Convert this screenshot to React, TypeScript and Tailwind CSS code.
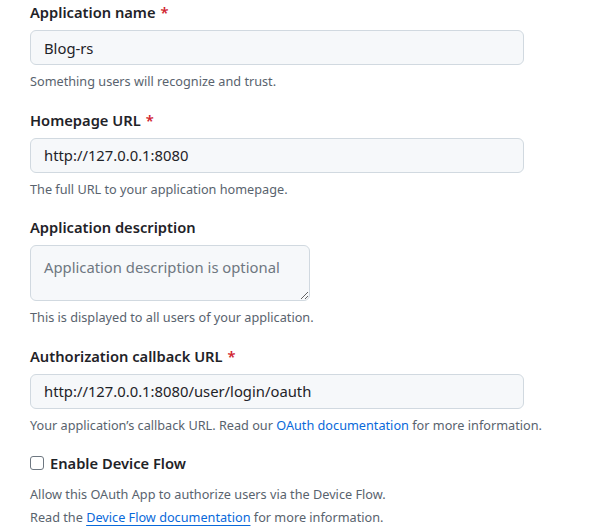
import React from 'react';

const font = { fontFamily: '"Segoe UI", "Noto Sans", "Liberation Sans", sans-serif' };

function Label({ text, required }: { text: string; required?: boolean }) {
  return (
    <div className="h-[22px] leading-[22px] text-[14.7px] font-semibold text-[#1f2328]">
      {text}
      {required && <span className="ml-[5px] text-[#d1242f]">*</span>}
    </div>
  );
}

function Hint({ children }: { children: React.ReactNode }) {
  return <div className="mt-[7px] h-[18px] leading-[18px] text-[12.7px] text-[#59636e]">{children}</div>;
}

function TextInput({ value }: { value: string }) {
  return (
    <input
      readOnly
      value={value}
      className="mt-[7px] block h-[35px] w-[494px] rounded-[6px] border border-[#d1d9e0] bg-[#f6f8fa] px-[13px] text-[14.8px] text-[#1f2328] outline-none"
    />
  );
}

export default function App() {
  return (
    <div className="min-h-screen bg-white pl-[30px] pt-[1px]" style={font}>
      {/* Application name */}
      <div className="mb-[18.5px]">
        <Label text="Application name" required />
        <TextInput value="Blog-rs" />
        <Hint>Something users will recognize and trust.</Hint>
      </div>

      {/* Homepage */}
      <div className="mb-[18.5px]">
        <Label text="Homepage URL" required />
        <TextInput value="http://127.0.0.1:8080" />
        <Hint>The full URL to your application homepage.</Hint>
      </div>

      {/* Description */}
      <div className="mb-[18.5px]">
        <Label text="Application description" />
        <textarea
          readOnly
          placeholder="Application description is optional"
          className="mt-[7px] block h-[56px] w-[280px] resize rounded-[6px] border border-[#d1d9e0] bg-[#f6f8fa] px-[13px] pt-[10px] text-[14.8px] leading-[22px] text-[#1f2328] placeholder:text-[#6e7781] outline-none"
        />
        <Hint>This is displayed to all users of your application.</Hint>
      </div>

      {/* Callback */}
      <div className="mb-[18.5px]">
        <Label text="Authorization callback URL" required />
        <TextInput value="http://127.0.0.1:8080/user/login/oauth" />
        <Hint>
          Your application’s callback URL. Read our{' '}
          <a className="text-[#0969da]">OAuth documentation</a> for more information.
        </Hint>
      </div>

      {/* Device flow */}
      <div>
        <label className="flex h-[22px] items-center text-[14.7px] font-semibold text-[#1f2328]">
          <span className="mr-[6px] inline-block h-[14px] w-[14px] rounded-[3px] border border-[#6e7781] bg-white" />
          Enable Device Flow
        </label>
        <div className="mt-[9px] h-[22px] leading-[22px] text-[12.7px] text-[#59636e]">
          Allow this OAuth App to authorize users via the Device Flow.
        </div>
        <div className="mt-[1px] h-[22px] leading-[22px] text-[12.7px] text-[#59636e]">
          Read the{' '}
          <a className="text-[#0969da] underline underline-offset-[3px]">Device Flow documentation</a> for more
          information.
        </div>
      </div>
    </div>
  );
}
